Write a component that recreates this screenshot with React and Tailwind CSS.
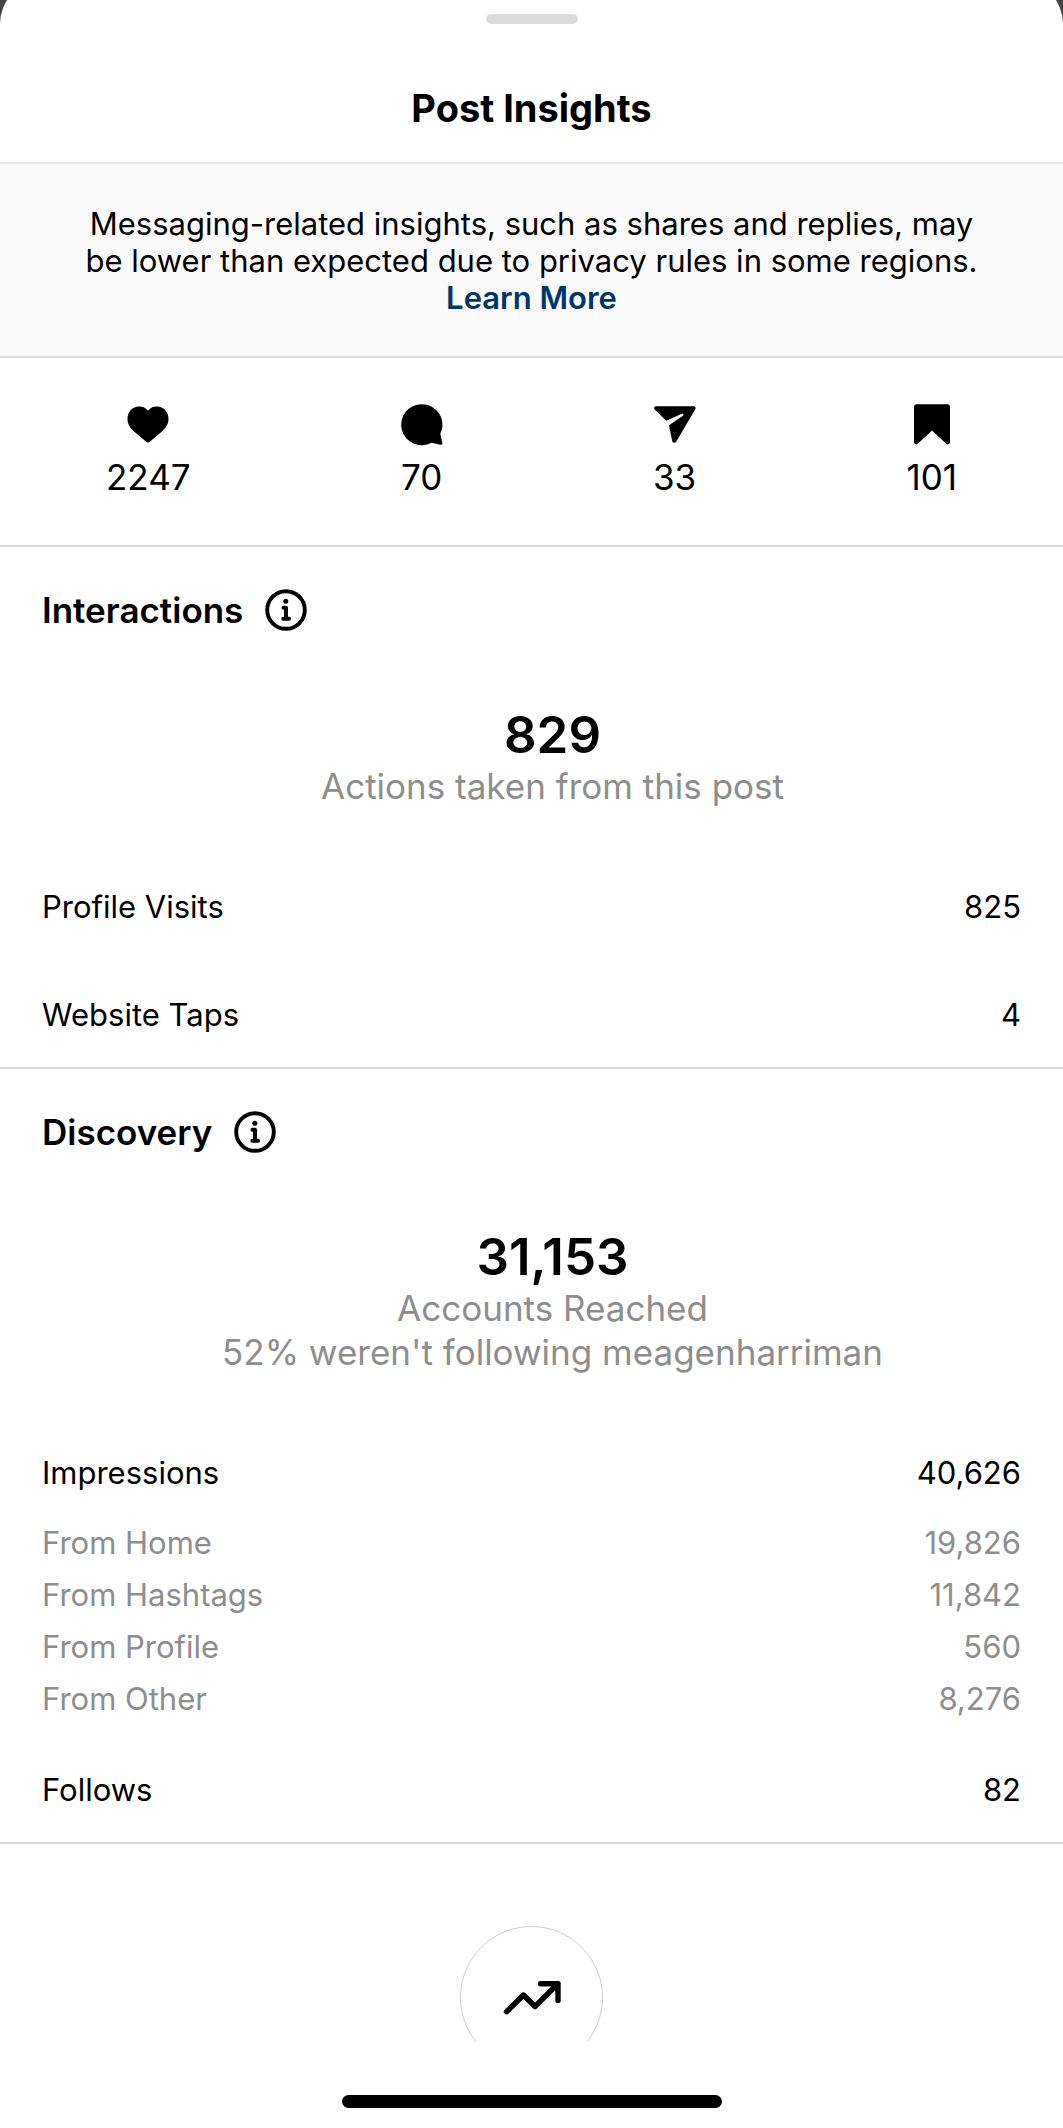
import React from "react";

const stats = [
  { label: "Likes", value: "2247", icon: HeartIcon },
  { label: "Comments", value: "70", icon: CommentIcon },
  { label: "Shares", value: "33", icon: ShareIcon },
  { label: "Saves", value: "101", icon: SaveIcon },
];

const sources = [
  { label: "From Home", value: "19,826" },
  { label: "From Hashtags", value: "11,842" },
  { label: "From Profile", value: "560" },
  { label: "From Other", value: "8,276" },
];

function HeartIcon() {
  return (
    <svg viewBox="0 0 42 42" className="size-[42px]" fill="currentColor" aria-hidden="true">
      <path d="M21 6.800C23 4 26.200 2.500 29.800 2.500C36.600 2.500 41.500 7.900 41.500 15C41.500 21 38 24.700 33.500 28.800L22.800 37.800C21.500 38.900 20.500 38.900 19.200 37.800L8.500 28.800C4 24.700 0.500 21 0.500 15C0.500 7.900 5.400 2.500 12.200 2.500C15.800 2.500 19 4 21 6.800Z" />
    </svg>
  );
}

function CommentIcon() {
  return (
    <svg viewBox="0 0 42 42" className="size-[42px]" fill="currentColor" aria-hidden="true">
      <path d="M20.700 0.200A20.500 20.500 0 1 0 30.500 38.700L39.500 40.800C40.800 41.100 41.500 40.200 41.300 39L39.300 29.800A20.500 20.500 0 0 0 20.700 0.200Z" />
    </svg>
  );
}

function ShareIcon() {
  return (
    <svg viewBox="0 0 42 42" className="size-[42px]" fill="currentColor" aria-hidden="true">
      <path d="M2 2.200H39.700C41.400 2.200 42.200 3.900 41.300 5.300L22.300 37.600C21.200 39.500 18.600 39.200 18.200 37L15 21.300L28.900 11.800C30.200 10.800 29.400 9.100 27.800 9.800L12.400 16.700L0.900 5.800C-0.500 4.400 0.200 2.200 2 2.200Z" />
    </svg>
  );
}

function SaveIcon() {
  return (
    <svg viewBox="0 0 42 42" className="size-[42px]" fill="currentColor" aria-hidden="true">
      <path d="M5.500 0.200H36.500C38 0.200 39 1.200 39 2.700V38C39 40.100 36.800 41.100 35.200 39.700L21 26.500L6.800 39.700C5.200 41.100 3 40.100 3 38V2.700C3 1.200 4 0.200 5.500 0.200Z" />
    </svg>
  );
}

function InfoIcon() {
  return (
    <svg viewBox="0 0 42 42" className="size-[42px]" fill="none" stroke="currentColor" aria-hidden="true">
      <circle cx="21" cy="21" r="18.800" strokeWidth="3.900" />
      <circle cx="20.800" cy="12.200" r="2.500" fill="currentColor" stroke="none" />
      <path d="M18.500 18.800H21V29.800M18.300 29.800H24" strokeWidth="4" strokeLinecap="round" strokeLinejoin="round" />
    </svg>
  );
}

function TrendIcon() {
  return (
    <svg viewBox="0 0 58 36" className="w-[58px]" fill="none" stroke="currentColor" strokeWidth="5.400" strokeLinecap="round" strokeLinejoin="round" aria-hidden="true">
      <path d="M3.500 31.700L20.500 15L32 26.500L55 3.700M37.500 3.700H55V20.500" />
    </svg>
  );
}

function SectionTitle({ children }) {
  return (
    <div className="flex items-center gap-[22px]">
      <h2 className="text-[35px] leading-[42px] font-semibold">{children}</h2>
      <button type="button" aria-label={`About ${children}`}>
        <InfoIcon />
      </button>
    </div>
  );
}

function Summary({ value, children }) {
  return (
    <div className="pt-[75px] pl-[42px] text-center">
      <p className="text-[51px] leading-[58px] font-semibold">{value}</p>
      <div className="text-[35px] leading-[44px] text-[#8e8e8e]">{children}</div>
    </div>
  );
}

function Row({ label, value }) {
  return (
    <div className="flex justify-between">
      <dt>{label}</dt>
      <dd>{value}</dd>
    </div>
  );
}

export default function App() {
  return (
    <div className="h-screen overflow-hidden bg-[#444444] font-['Inter',sans-serif] text-black">
      <div className="-mt-5 flex h-[calc(100%+20px)] flex-col rounded-t-[44px] bg-white pt-[34px]">
        {/* Sheet header */}
        <header className="flex shrink-0 flex-col items-center border-b-2 border-[#e9e9e9] pb-[30px]">
          <div className="h-[10px] w-[92px] rounded-full bg-[#dbdbdb]" />
          <h1 className="mt-[60px] text-[38px] leading-[48px] font-bold">Post Insights</h1>
        </header>

        <main className="min-h-0 flex-1 overflow-y-auto [scrollbar-width:none]">
          <p className="border-b-2 border-[#dbdbdb] bg-[#fafafa] px-[78px] pt-[41px] pb-10 text-center text-[31px] leading-[37px]">
            Messaging-related insights, such as shares and replies, may be lower than expected due to privacy rules in some regions.{" "}
            <a href="#learn-more" className="block font-semibold text-[#00376b]">
              Learn More
            </a>
          </p>

          {/* Engagement counts */}
          <ul className="flex justify-between border-b-2 border-[#dbdbdb] px-[106px] pt-[46px] pb-[46px]">
            {stats.map(({ label, value, icon: Icon }) => (
              <li key={label} title={label} className="flex flex-col items-center gap-[9px]">
                <Icon />
                <span className="text-[35px] leading-[44px]">{value}</span>
              </li>
            ))}
          </ul>

          <section className="border-b-2 border-[#dbdbdb] px-[42px] pt-[42px] pb-[32px]">
            <SectionTitle>Interactions</SectionTitle>
            <Summary value="829">
              <p>Actions taken from this post</p>
            </Summary>
            <dl className="mt-[79px] flex flex-col gap-[68px] text-[31px] leading-[40px]">
              <Row label="Profile Visits" value="825" />
              <Row label="Website Taps" value="4" />
            </dl>
          </section>

          <section className="border-b-2 border-[#dbdbdb] px-[42px] pt-[42px] pb-[32px]">
            <SectionTitle>Discovery</SectionTitle>
            <Summary value="31,153">
              <p>Accounts Reached</p>
              <p>52% weren't following meagenharriman</p>
            </Summary>
            <dl className="mt-[79px] text-[31px] leading-[40px]">
              <Row label="Impressions" value="40,626" />
              <div className="my-[30px] flex flex-col gap-3 pb-[21px] text-[#8e8e8e]">
                {sources.map((source) => (
                  <Row key={source.label} {...source} />
                ))}
              </div>
              <Row label="Follows" value="82" />
            </dl>
          </section>

          <div className="flex justify-center pt-[82px]">
            <div className="flex size-[143px] shrink-0 items-center justify-center rounded-full border border-[#cfcfcf]">
              <TrendIcon />
            </div>
          </div>
        </main>

        {/* Home indicator */}
        <footer className="flex h-[86px] shrink-0 justify-center pt-[53px]">
          <div className="h-[13px] w-[380px] rounded-full bg-black" />
        </footer>
      </div>
    </div>
  );
}
